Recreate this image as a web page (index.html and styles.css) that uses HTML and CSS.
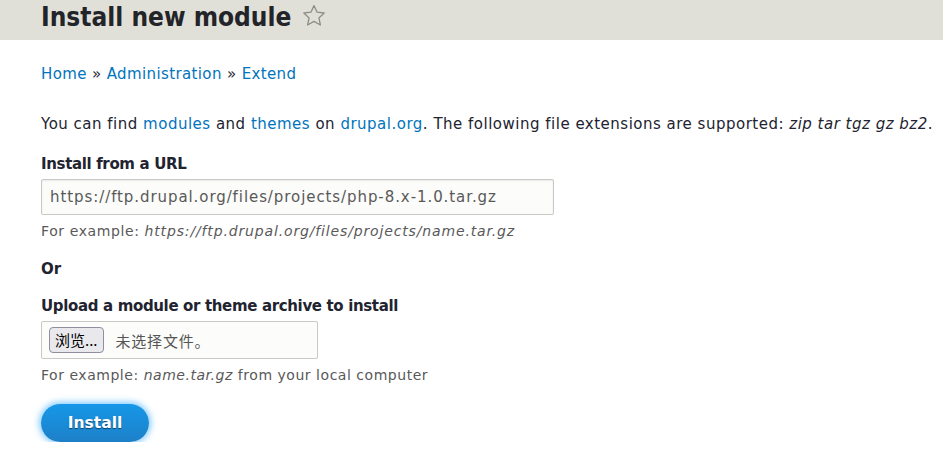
FILE: index.html
```html
<!DOCTYPE html>
<html lang="en">
<head>
<meta charset="utf-8">
<title>Install new module</title>
<link rel="stylesheet" href="styles.css">
</head>
<body>
<header class="page-header">
  <h1 class="page-title">Install new module <span class="star"><svg width="24" height="24" viewBox="0 0 24 24"><path d="M12 1.6l3.1 6.6 7.1.8-5.3 4.9 1.5 7.1L12 17.4l-6.4 3.6 1.5-7.1-5.3-4.9 7.1-.8z" fill="none" stroke="#8e8e86" stroke-width="1.3" stroke-linejoin="round"/></svg></span></h1>
</header>
<main class="content">
  <nav class="breadcrumb"><a href="#">Home</a> » <a href="#">Administration</a> » <a href="#">Extend</a></nav>
  <p class="intro">You can find <a href="#">modules</a> and <a href="#">themes</a> on <a href="#">drupal.org</a>. The following file extensions are supported: <em>zip tar tgz gz bz2</em>.</p>
  <div class="form-item">
    <label class="label">Install from a URL</label>
    <div class="text-input">https://ftp.drupal.org/files/projects/php-8.x-1.0.tar.gz</div>
    <div class="description">For example: <em>https://ftp.drupal.org/files/projects/name.tar.gz</em></div>
  </div>
  <div class="or">Or</div>
  <div class="form-item upload">
    <label class="label">Upload a module or theme archive to install</label>
    <div class="file-input"><span class="browse">浏览...</span><span class="nofile">未选择文件。</span></div>
    <div class="description">For example: <em>name.tar.gz</em> from your local computer</div>
  </div>
  <div class="actions"><span class="install">Install</span></div>
</main>
</body>
</html>
```
FILE: styles.css
```css
html, body { margin: 0; padding: 0; }
body {
  font-family: "DejaVu Sans", "Noto Sans CJK SC", sans-serif;
  font-size: 15px;
  color: #222330;
  background: #fff;
  letter-spacing: 0.38px;
  overflow: hidden;
}
a { color: #0074bd; text-decoration: none; }
.page-header {
  background: #e0e0d8;
  height: 40px;
  padding: 0 41px;
  overflow: hidden;
}
.page-title {
  margin: 0;
  padding-top: 1px;
  font-family: "DejaVu Sans Condensed", "DejaVu Sans", sans-serif;
  font-size: 26px;
  font-weight: bold;
  line-height: 32px;
  letter-spacing: 0;
  color: #232429;
  display: flex;
  align-items: center;
  gap: 11px;
}
.star { display: inline-flex; margin-top: -3px; }
.content { padding: 0 41px; }
.breadcrumb { margin-top: 23px; font-size: 15px; line-height: 22px; }
.intro { margin: 28px 0 0; line-height: 22px; white-space: nowrap; letter-spacing: 0.5px; }
.form-item { margin-top: 18px; }
.label { display: block; font-weight: bold; line-height: 22px; letter-spacing: -0.35px; }
.text-input {
  margin-top: 4px;
  width: 513px;
  height: 36px;
  box-sizing: border-box;
  border: 1px solid #c8c8c4;
  border-radius: 2px;
  background: #fcfcfa;
  box-shadow: inset 0 1px 2px rgba(0,0,0,0.08);
  color: #595959;
  padding: 0 8px;
  line-height: 34px;
  letter-spacing: 0.92px;
}
.description { color: #595959; font-size: 14px; line-height: 22px; margin-top: 5px; letter-spacing: 0.6px; }
.description em { letter-spacing: 0.85px; }
.upload .description, .upload .description em { letter-spacing: 0.53px; }
.or { margin-top: 16px; font-weight: bold; line-height: 22px; letter-spacing: 0; }
.form-item.upload { margin-top: 15px; }
.file-input {
  margin-top: 4px;
  width: 277px;
  height: 38px;
  box-sizing: border-box;
  border: 1px solid #c8c8c4;
  border-radius: 2px;
  background: #fcfcfa;
  display: flex;
  align-items: center;
  padding: 0 7px;
  gap: 12px;
  letter-spacing: 0;
}
.browse {
  font-family: "Noto Sans CJK SC", sans-serif;
  font-size: 15px;
  color: #000;
  background: #e9e9ed;
  border: 1px solid #8f8f9d;
  border-radius: 4px;
  padding: 0 5px;
  height: 26px;
  box-sizing: border-box;
  line-height: 24px;
}
.nofile { font-family: "Noto Sans CJK SC", sans-serif; font-size: 15px; color: #555; letter-spacing: 0.8px; }
.actions { margin-top: 18px; }
.install {
  display: inline-block;
  width: 108px;
  height: 38px;
  line-height: 38px;
  text-align: center;
  border-radius: 20px;
  color: #fff;
  font-weight: bold;
  font-size: 15.5px;
  letter-spacing: 0;
  background: linear-gradient(to bottom, #1597e8, #1e80c8);
  box-shadow: 0 0 6px 2px rgba(51, 170, 255, 0.6);
  text-shadow: 0 1px 1px rgba(0,0,0,0.5);
}
```
